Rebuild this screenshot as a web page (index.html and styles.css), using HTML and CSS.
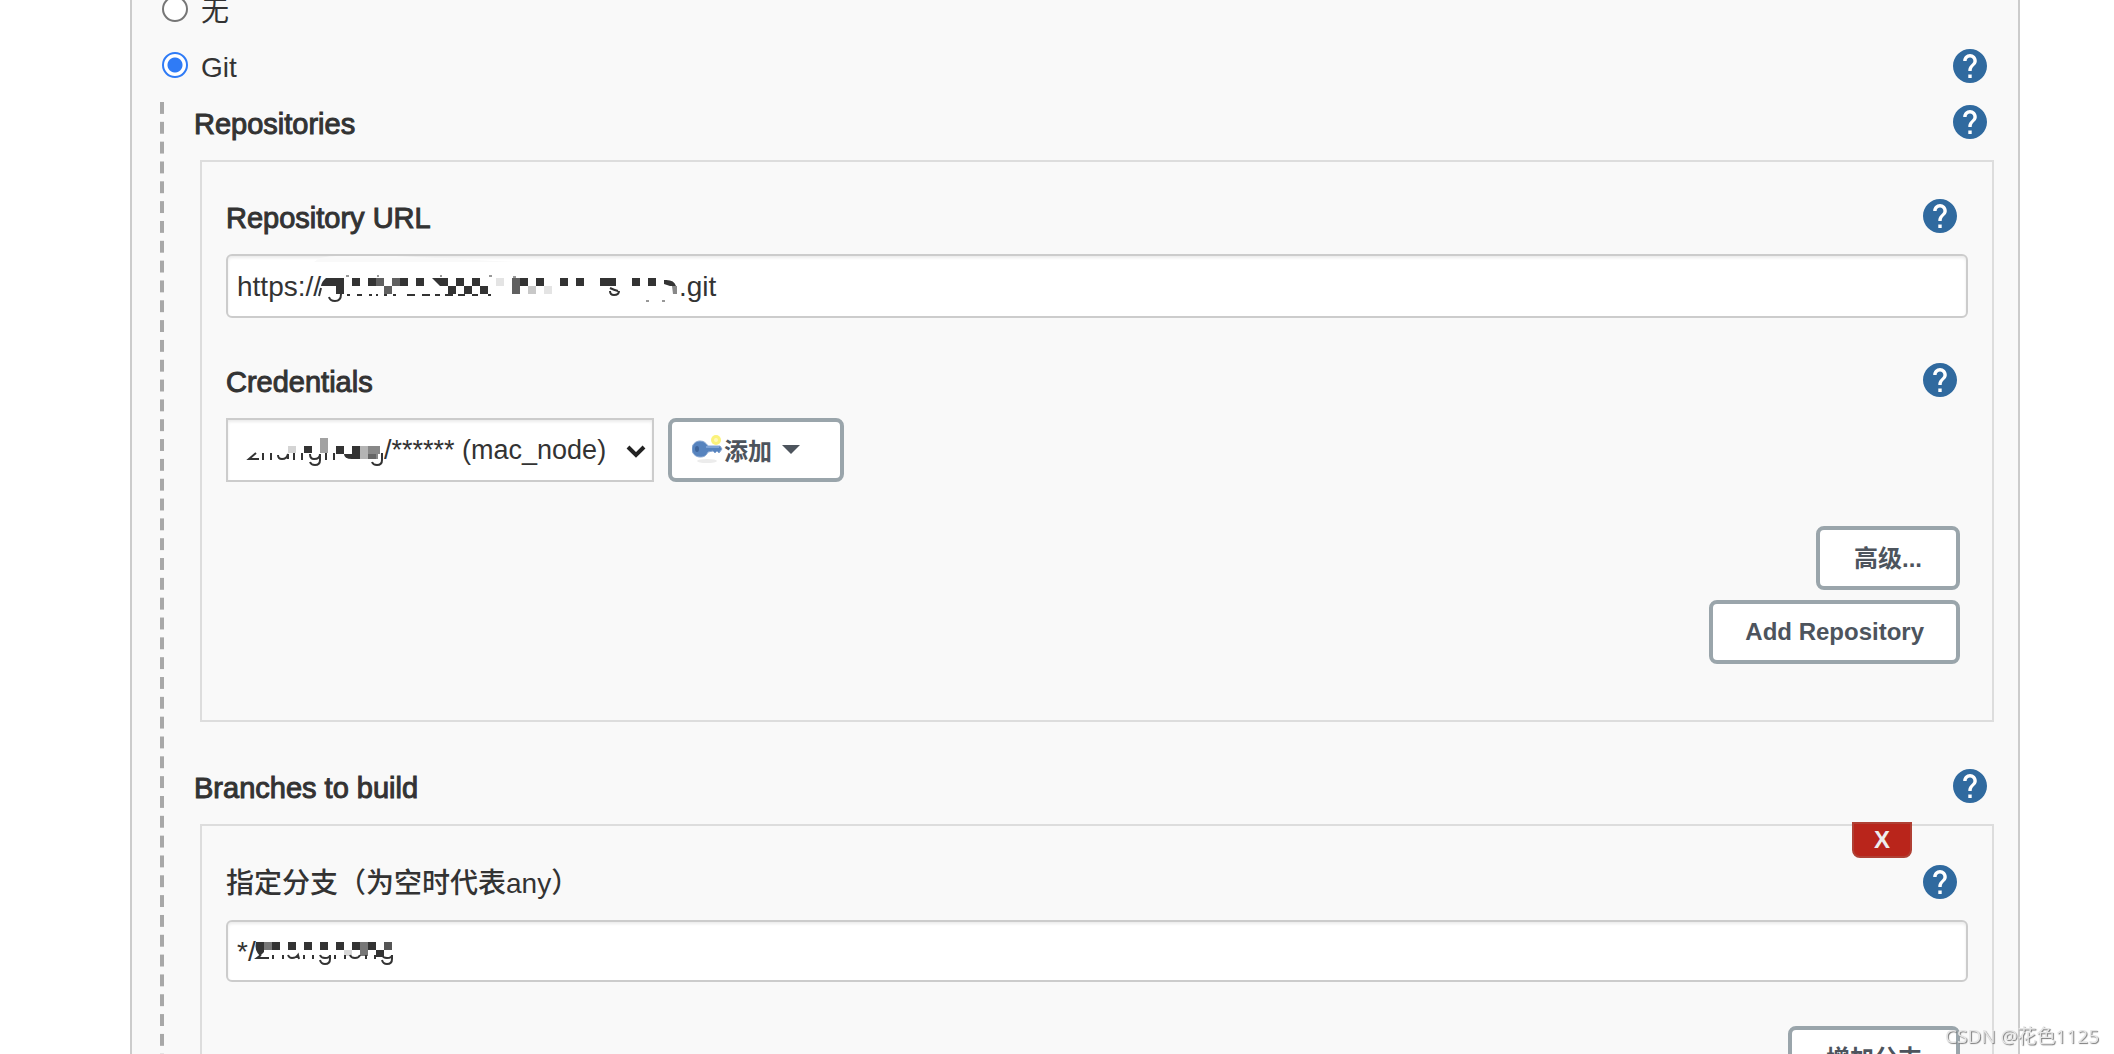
FILE: index.html
```
<!DOCTYPE html>
<html lang="zh-CN">
<head>
    <meta charset="UTF-8">
    <meta name="viewport" content="width=device-width, initial-scale=1.0">
    <title>源码管理</title>
    <link rel="stylesheet" href="styles.css">
</head>
<body>
    <!-- Shared icons -->
    <svg class="icon-defs" aria-hidden="true">
        <symbol id="icon-help" viewBox="2 2 20 20">
            <path d="M12 2C6.48 2 2 6.48 2 12s4.48 10 10 10 10-4.48 10-10S17.52 2 12 2zm1 17h-2v-2h2v2zm2.07-7.75l-.9.92C13.45 12.9 13 13.5 13 15h-2v-.5c0-1.1.45-2.1 1.17-2.83l1.24-1.26c.37-.36.59-.86.59-1.41 0-1.1-.9-2-2-2s-2 .9-2 2H8c0-2.21 1.79-4 4-4s4 1.79 4 4c0 .88-.36 1.68-.93 2.25z"/>
        </symbol>
    </svg>

    <main class="panel">
        <div class="scm-list">
            <div class="scm-row">
                <label class="scm-option"><input type="radio" name="scm" value="none"> 无</label>
            </div>
            <div class="scm-row">
                <label class="scm-option"><input type="radio" name="scm" value="git" checked> Git</label>
                <button type="button" class="help" aria-label="Help: Git"><svg><use href="#icon-help"/></svg></button>
            </div>
        </div>

        <div class="scm-body">
            <section>
                <div class="row">
                    <span class="title">Repositories</span>
                    <button type="button" class="help" aria-label="Help: Repositories"><svg><use href="#icon-help"/></svg></button>
                </div>
                <div class="box">
                    <div class="row">
                        <label class="title" for="repoUrl">Repository URL</label>
                        <button type="button" class="help" aria-label="Help: Repository URL"><svg><use href="#icon-help"/></svg></button>
                    </div>
                    <div class="field">
                        <input class="text-input" type="text" id="repoUrl" value="https://&nbsp;&nbsp;&nbsp;&nbsp;&nbsp;&nbsp;&nbsp;&nbsp;&nbsp;&nbsp;&nbsp;&nbsp;&nbsp;&nbsp;&nbsp;&nbsp;&nbsp;&nbsp;&nbsp;&nbsp;&nbsp;&nbsp;&nbsp;&nbsp;&nbsp;&nbsp;&nbsp;&nbsp;&nbsp;&nbsp;&nbsp;&nbsp;&nbsp;&nbsp;&nbsp;&nbsp;&nbsp;&nbsp;&nbsp;&nbsp;&nbsp;&nbsp;&nbsp;&nbsp;&nbsp;&nbsp;.git">
                        <svg class="mask" width="480" height="64" viewBox="0 0 480 64" aria-hidden="true">
                            <path fill="#f9f9f9" d="M88 8q6-6 22-6h60l120 6z"/>
                            <path fill="#333" d="M100 24h18v16h-8v-8h-15q1-5 5-8zM126 24h8v8h-8zM142 24h8v8h-8zM174 24h8v8h-8zM190 24h8v8h-8zM206 24h16v8h8v8h-8v-8h-8zM230 24h8v8h8v8h-8v-8h-8zM246 24h8v8h8v8h-8v-8h-8zM294 24h8v8h-8zM310 24h8v8h-8zM334 24h8v8h-8zM350 24h8v8h-8zM374 24h16v8h-16zM406 24h8v8h-8zM422 24h8v8h-8zM438 26q10-1 12 6h-6l-6-2z"/>
                            <path fill="#606060" d="M150 24h8v8h-8zM158 32h8v8h-8zM166 24h8v8h-8zM286 24h8v16h-8z"/>
                            <path fill="#888" d="M446 32h5v8h-4z"/>
                            <path fill="#c8c8c8" d="M302 32h8v8h-8z"/>
                            <path fill="#e4e4e4" d="M270 24h8v8h-8zM318 32h8v8h-8z"/>
                            <g fill="none" stroke="#333" stroke-width="2">
                                <path d="M103 43q1 4 6 4 6 0 6-7M93 42l2-8M384 37q0 4 4 4 5 0 5-4M384 34q4 2 8 3"/>
                                <path d="M121 41h3M131 41h5M143 41h3M150 41h2M158 41h3M167 41h3M181 41h8M196 41h8M209 41h5M219 41h8M232 41h7M246 41h6M262 41h3"/>
                                <path stroke-width="1" d="M120 22h3M151 22h2M214 22h2M263 22h3M287 23h3M420 47h3M436 47h3"/>
                            </g>
                        </svg>
                    </div>

                    <div class="row spaced">
                        <label class="title" for="credentials">Credentials</label>
                        <button type="button" class="help" aria-label="Help: Credentials"><svg><use href="#icon-help"/></svg></button>
                    </div>
                    <div class="field credentials">
                        <div class="select-wrap">
                            <select id="credentials">
                                <option>/****** (mac_node)</option>
                            </select>
                            <svg class="arrow" width="20" height="14" viewBox="0 0 20 14" aria-hidden="true">
                                <path d="M2 3l8 8 8-8" fill="none" stroke="#222" stroke-width="4"/>
                            </svg>
                            <svg class="mask" width="160" height="64" viewBox="0 0 160 64" aria-hidden="true">
                                <g fill="none" stroke="#333" stroke-width="2">
                                    <path d="M30 35l-7 6h10M37 35v7M45 35v7M52 37q0 4 4 4 5 0 6-5v5M68 35v7M76 35v7M84 36q0 5 4 5 6 0 6-5v6q0 5-5 5-4 0-5-3M100 35v7M108 35v7M156 35v7q0 5-5 5-4 0-5-3"/>
                                </g>
                                <path fill="#333" d="M78 28h8v7h-8zM110 28h8v8h-8zM126 28h8v13h-8q-8 0-8-5h8z"/>
                                <path fill="#d4d4d4" d="M62 28h8v7h-8z"/>
                                <path fill="#a2a2a2" d="M94 20h8v15h-8z"/>
                                <path fill="#b4b4b4" d="M134 28h8v13h-8z"/>
                                <path fill="#888" d="M142 28h12v8h-2v5h-10z"/>
                                <path fill="#666" d="M142 36h8v5h-8z"/>
                            </svg>
                        </div>
                        <button type="button" class="btn btn-cjk btn-add">
                            <svg class="key" width="32" height="30" viewBox="0 0 32 30" aria-hidden="true">
                                <ellipse cx="15" cy="27" rx="10" ry="2" fill="#ececec"/>
                                <circle cx="24" cy="6" r="5" fill="#fbf27a"/>
                                <circle cx="24" cy="6" r="2" fill="#fff9b8"/>
                                <path fill="#5683be" stroke="#86a6d2" d="M8 7c4 0 6 2 8 5h12l2 3-3 4-2-2-2 2-2-2-5 1c-2 4-4 5-8 5-5 0-8-4-8-8s3-8 8-8z"/>
                                <path fill="#7ea3d6" d="M14 12h13v2h-13z"/>
                                <ellipse cx="5" cy="15" rx="2" ry="3" fill="#3e659c"/>
                            </svg>
                            添加
                            <svg class="caret" width="18" height="9" viewBox="0 0 18 9" aria-hidden="true"><path d="M0 0h18l-9 9z"/></svg>
                        </button>
                    </div>

                    <div class="actions">
                        <button type="button" class="btn btn-cjk">高级...</button>
                        <button type="button" class="btn">Add Repository</button>
                    </div>
                </div>
            </section>

            <section class="branches">
                <div class="row">
                    <span class="title">Branches to build</span>
                    <button type="button" class="help" aria-label="Help: Branches to build"><svg><use href="#icon-help"/></svg></button>
                </div>
                <div class="box">
                    <button type="button" class="delete" aria-label="Delete branch">X</button>
                    <div class="row">
                        <label class="title title-cjk" for="branch">指定分支（为空时代表any）</label>
                        <button type="button" class="help" aria-label="Help: branch"><svg><use href="#icon-help"/></svg></button>
                    </div>
                    <div class="field">
                        <input class="text-input" type="text" id="branch" value="*/">
                        <svg class="mask" width="200" height="62" viewBox="0 0 200 62" aria-hidden="true">
                            <path fill="#333" d="M30 22h8v10l-4 4q-6-6-4-14zM46 22h8v8h-8zM62 22h8v8h-8zM78 22h8v8h-8zM94 22h8v8h-8zM110 22h8v8h-8zM126 22h8v8h-8zM142 22h8v8h8v7h-8v-7h-8z"/>
                            <path fill="#777" d="M38 22h8v8h-8zM134 22h8v14h-8z"/>
                            <path fill="#555" d="M158 22h8v8h-8z"/>
                            <path fill="#d8d8d8" d="M118 30h8v6h-8z"/>
                            <g fill="none" stroke="#333" stroke-width="2">
                                <path d="M35 35l-4 3h12M47 35v4M57 35v4M62 35q1 3 4 3 4 0 6-3l1 4M78 35v4M87 35v4M94 35q1 3 5 3 5 0 5-3v4q0 5-5 5-4 0-5-4M109 35v4M119 35v4M124 35q1 3 5 3 4 0 5-3M140 35v4M149 35v4M156 35q1 3 5 3 5 0 5-3v4q0 5-5 5-4 0-5-4"/>
                            </g>
                        </svg>
                    </div>
                    <div class="actions">
                        <button type="button" class="btn btn-cjk">增加分支</button>
                    </div>
                </div>
            </section>
        </div>
    </main>

    <div class="watermark">CSDN @花色1125</div>
</body>
</html>
```
FILE: styles.css
```
:root {
    --text-color: #333;
    --panel-bg: #f9f9f9;
    --panel-border: #ccc;
    --box-border: #ddd;
    --btn-border: #9aa5ab;
    --btn-text: #4d545d;
    --help-color: #306a9f;
    --radio-color: #2f7bf6;
}

* {
    box-sizing: border-box;
}

body {
    margin: 0;
    height: 100vh;
    overflow: hidden;
    background-color: #fff;
    color: var(--text-color);
    font-family: "Liberation Sans", "Noto Sans CJK SC", sans-serif;
    font-size: 28px;
    line-height: 32px;
}

button,
input,
select {
    font-family: inherit;
    color: inherit;
    margin: 0;
}

.icon-defs {
    position: absolute;
    width: 0;
    height: 0;
}

.panel {
    display: flex;
    flex-direction: column;
    height: 100vh;
    margin: 0 94px 0 130px;
    padding: 0 24px 0 28px;
    background-color: var(--panel-bg);
    border: solid var(--panel-border);
    border-width: 0 2px;
}

/* the list is scrolled a little past its first option */
.scm-list {
    margin-top: -18px;
}

.scm-row,
.row {
    display: flex;
    align-items: center;
    justify-content: space-between;
}

.scm-row {
    height: 56px;
    padding-right: 7px;
}

.scm-option {
    display: flex;
    align-items: center;
    gap: 13px;
    padding: 4px 0 0 2px;
}

.scm-option input {
    appearance: none;
    width: 26px;
    height: 26px;
    margin-bottom: 6px;
    background-color: #fff;
    border: 2px solid #767676;
    border-radius: 50%;
}

.scm-option input:checked {
    border-color: var(--radio-color);
    background: radial-gradient(circle, var(--radio-color) 7px, #fff 8px);
}

.scm-body {
    flex: 1;
    min-height: 0;
    margin-top: 8px;
    padding-left: 34px;
    background: linear-gradient(#a8a8a8 60%, transparent 60%) 0 0 / 4px 20px;
    background-repeat: no-repeat round;
}

.row {
    height: 40px;
    padding-right: 7px;
}

.title {
    padding-top: 4px;
    font-size: 29px;
    -webkit-text-stroke: 1px var(--text-color);
}

.title-cjk {
    font-size: 28px;
    font-weight: 500;
    -webkit-text-stroke: 0;
}

.help {
    width: 34px;
    height: 34px;
    padding: 0;
    border: none;
    border-radius: 50%;
    background-color: #fff;
    cursor: pointer;
}

.help svg {
    display: block;
    width: 34px;
    height: 34px;
    fill: var(--help-color);
}

.box {
    position: relative;
    margin: 18px 0 0 6px;
    padding: 34px 24px 56px;
    border: 2px solid var(--box-border);
}

.box .row {
    padding-right: 11px;
}

.spaced {
    margin-top: 42px;
}

.field {
    position: relative;
    margin-top: 18px;
}

.text-input {
    display: block;
    width: 100%;
    height: 64px;
    padding: 2px 9px 0;
    font-size: 28px;
    background-color: #fff;
    border: 2px solid var(--panel-border);
    border-radius: 6px;
    box-shadow: inset 0 2px 3px rgba(0, 0, 0, 0.08);
}

/* mosaic over the private part of a value */
.mask {
    position: absolute;
    top: 0;
    left: 0;
    pointer-events: none;
}

.credentials {
    display: flex;
    gap: 14px;
}

.select-wrap {
    position: relative;
}

.select-wrap select {
    appearance: none;
    display: block;
    width: 428px;
    height: 64px;
    padding: 0 30px 0 156px;
    font-size: 27px;
    background-color: #fff;
    border: 2px solid var(--panel-border);
    border-radius: 0;
    box-shadow: inset 0 2px 3px rgba(0, 0, 0, 0.08);
}

.arrow {
    position: absolute;
    right: 8px;
    top: 26px;
    pointer-events: none;
}

.btn {
    height: 64px;
    padding: 0 32px;
    font-size: 24px;
    font-weight: bold;
    color: var(--btn-text);
    background-color: #fff;
    border: 4px solid var(--btn-border);
    border-radius: 8px;
    cursor: pointer;
}

.btn-cjk {
    padding: 0 34px 4px;
}

.btn-add {
    display: flex;
    align-items: center;
    padding: 0 40px 2px 20px;
}

.caret {
    margin-left: 10px;
    fill: var(--btn-text);
}

.actions {
    display: flex;
    flex-direction: column;
    align-items: flex-end;
    gap: 10px;
    margin: 44px 8px 0 0;
}

.branches {
    margin-top: 44px;
}

.branches .box {
    padding-top: 36px;
}

.branches .text-input {
    height: 62px;
}

.delete {
    position: absolute;
    top: -4px;
    right: 80px;
    width: 60px;
    height: 36px;
    padding: 0;
    font-size: 24px;
    font-weight: bold;
    line-height: 30px;
    color: #eee;
    background-color: #b9251b;
    border: 2px solid #b04034;
    border-radius: 0 0 8px 8px;
    cursor: pointer;
}

.watermark {
    position: fixed;
    right: 15px;
    bottom: 2px;
    font-family: "Open Sans", "Noto Sans CJK SC", sans-serif;
    font-size: 19px;
    color: #e6e6e6;
    text-shadow: 1px 1px 1px #777;
}
```
